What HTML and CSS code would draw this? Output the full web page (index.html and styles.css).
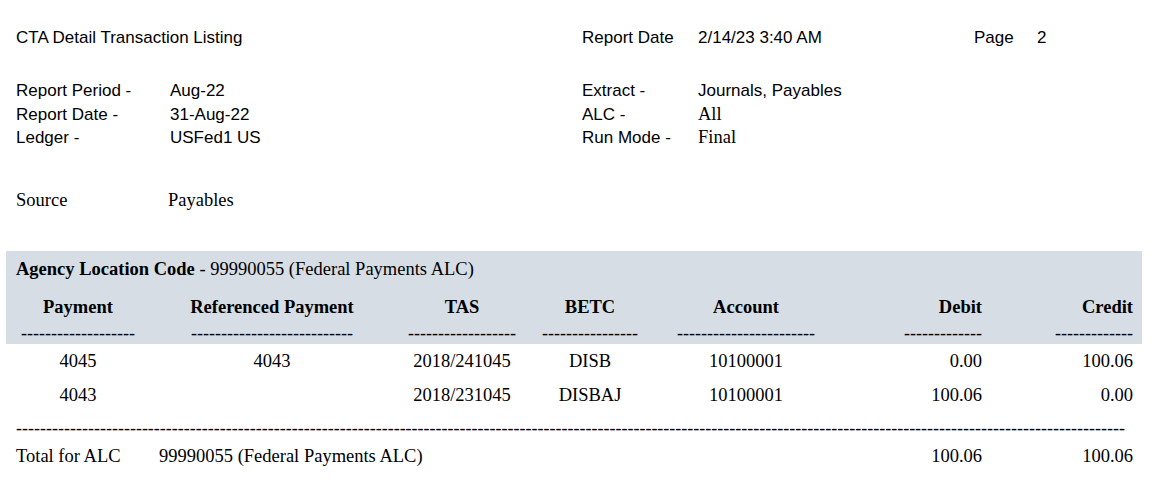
FILE: index.html
```html
<!DOCTYPE html>
<html lang="en">
<head>
<meta charset="utf-8">
<title>CTA Detail Transaction Listing</title>
<link rel="stylesheet" href="styles.css">
</head>
<body>
<div class="report">
  <div class="meta title-row">
    <div class="title">CTA Detail Transaction Listing</div>
    <div class="label">Report Date</div>
    <div class="value">2/14/23 3:40 AM</div>
    <div class="label">Page</div>
    <div class="value">2</div>
  </div>

  <div class="meta info">
    <div class="label">Report Period -</div>
    <div class="value">Aug-22</div>
    <div class="label">Extract -</div>
    <div class="value">Journals, Payables</div>

    <div class="label">Report Date -</div>
    <div class="value">31-Aug-22</div>
    <div class="label">ALC -</div>
    <div class="value serif">All</div>

    <div class="label">Ledger -</div>
    <div class="value">USFed1 US</div>
    <div class="label">Run Mode -</div>
    <div class="value serif">Final</div>
  </div>

  <div class="source">
    <div>Source</div>
    <div>Payables</div>
  </div>

  <div class="band">
    <div class="alc"><b>Agency Location Code</b> - 99990055 (Federal Payments ALC)</div>
    <div class="cols head">
      <div class="c">Payment</div>
      <div class="c">Referenced Payment</div>
      <div class="c">TAS</div>
      <div class="c">BETC</div>
      <div class="c">Account</div>
      <div class="r">Debit</div>
      <div class="r">Credit</div>
    </div>
    <div class="cols dashes">
      <div class="c">-------------------</div>
      <div class="c">---------------------------</div>
      <div class="c">------------------</div>
      <div class="c">----------------</div>
      <div class="c">-----------------------</div>
      <div class="r">-------------</div>
      <div class="r">-------------</div>
    </div>
  </div>

  <div class="rows">
    <div class="cols row">
      <div class="c">4045</div>
      <div class="c">4043</div>
      <div class="c">2018/241045</div>
      <div class="c">DISB</div>
      <div class="c">10100001</div>
      <div class="r">0.00</div>
      <div class="r">100.06</div>
    </div>
    <div class="cols row">
      <div class="c">4043</div>
      <div class="c"></div>
      <div class="c">2018/231045</div>
      <div class="c">DISBAJ</div>
      <div class="c">10100001</div>
      <div class="r">100.06</div>
      <div class="r">0.00</div>
    </div>
    <div class="rule">-----------------------------------------------------------------------------------------------------------------------------------------------------------------------------------------</div>
    <div class="total">
      <div>Total for ALC</div>
      <div>99990055 (Federal Payments ALC)</div>
      <div class="r">100.06</div>
      <div class="r">100.06</div>
    </div>
  </div>
</div>
</body>
</html>
```

FILE: styles.css
```css
html, body {
  margin: 0;
  padding: 0;
  background: #ffffff;
  color: #000000;
}

.report {
  width: 1158px;
  padding-top: 26px;
  font-family: "Liberation Serif", "Times New Roman", serif;
  font-size: 18.5px;
}

.meta {
  display: grid;
  grid-template-columns: 154px 412px 116px 276px 63px 1fr;
  padding-left: 16px;
  font-family: "Liberation Sans", Arial, sans-serif;
  font-size: 17px;
}

.title-row {
  line-height: 24px;
}

.title {
  grid-column: 1 / 3;
}

.info {
  margin-top: 29px;
  line-height: 23.5px;
  grid-template-columns: 154px 412px 116px 1fr;
}

.serif {
  font-family: "Liberation Serif", "Times New Roman", serif;
  font-size: 18.5px;
}

.source {
  display: grid;
  grid-template-columns: 152px 1fr;
  padding-left: 16px;
  margin-top: 38.5px;
  line-height: 24px;
}

.band {
  margin-top: 39px;
  margin-left: 6px;
  width: 1117px;
  padding: 6px 9px 3px 10px;
  background: #d6dde5;
}

.alc {
  line-height: 24px;
}

.cols {
  display: grid;
  grid-template-columns: 124px 264px 116px 140px 172px 150px 151px;
}

.head {
  margin-top: 14px;
  line-height: 24px;
  font-weight: bold;
}

.dashes {
  margin-top: 6px;
  line-height: 16px;
  font-size: 18px;
}

.c {
  text-align: center;
}

.r {
  text-align: right;
}

.rows {
  padding-left: 16px;
}

.row {
  height: 34px;
  align-items: center;
  line-height: 24px;
}

.rule {
  white-space: nowrap;
  font-size: 18px;
  line-height: 32px;
}

.total {
  display: grid;
  grid-template-columns: 143px 673px 150px 151px;
  line-height: 24px;
}
```
